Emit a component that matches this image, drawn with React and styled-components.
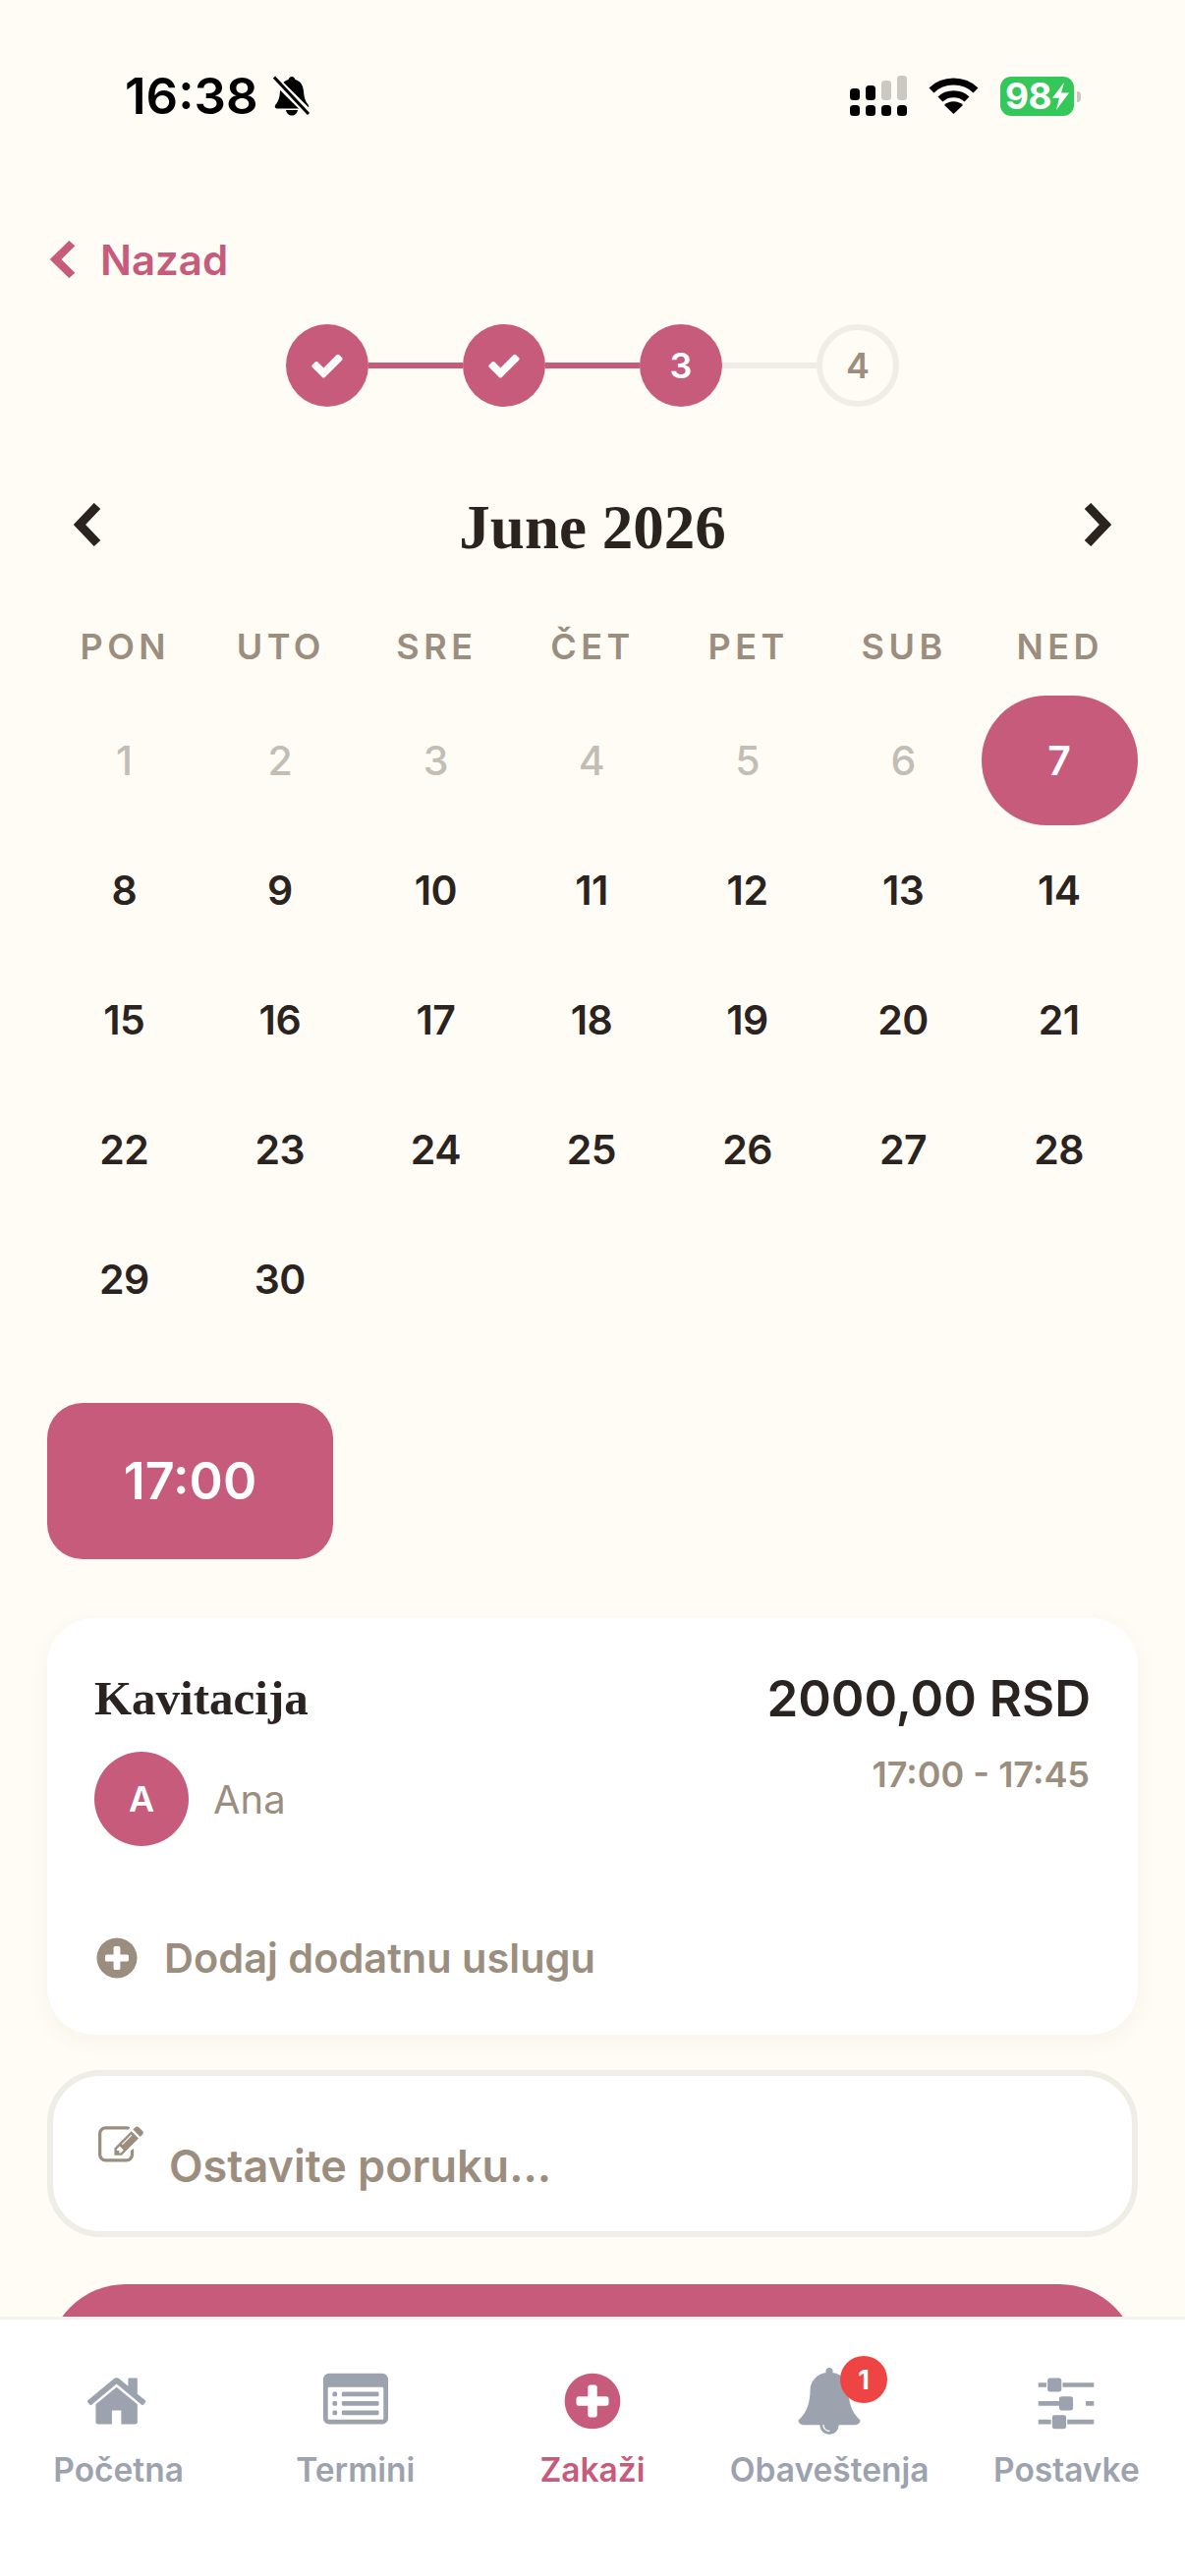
import styled, { createGlobalStyle } from "styled-components";

const PINK = "#c65b7c";
const INK = "#2a2320";
const MUTED = "#9c8e7e";
const LINE = "#f0ede6";
const GREY = "#9ca3af";

const GlobalStyle = createGlobalStyle`
  html, body { margin: 0; padding: 0; height: 2622px; overflow: hidden; background: #fffcf5; }
  body { font-family: Inter, "Noto Sans", sans-serif; color: ${INK}; }
  * { box-sizing: border-box; }
`;

const Page = styled.div`
  width: 1206px;
  height: 2622px;
  overflow: hidden;
  position: relative;
  background: #fffcf5;
`;

const StatusBar = styled.div`
  height: 41px;
  margin-top: 77px;
  padding: 0 113px 0 127px;
  display: flex;
  align-items: center;
  justify-content: space-between;
  color: #000;
`;

const StatusLeft = styled.div`
  display: flex;
  align-items: center;
  gap: 15px;
`;

const Clock = styled.span`
  font-size: 51px;
  font-weight: 600;
  line-height: 41px;
`;

const StatusRight = styled.div`
  display: flex;
  align-items: center;
  gap: 22px;
`;

const Battery = styled.div`
  width: 75px;
  height: 40px;
  border-radius: 11px;
  background: #34c759;
  color: #fff;
  display: flex;
  align-items: center;
  justify-content: center;
  gap: 1px;
  font-size: 37px;
  font-weight: 700;
  letter-spacing: -0.5px;
  position: relative;
  &::after {
    content: "";
    position: absolute;
    right: -7px;
    top: 15px;
    width: 4px;
    height: 11px;
    border-radius: 0 4px 4px 0;
    background: #c8c7c2;
  }
`;

const Back = styled.div`
  height: 42px;
  margin: 125px 0 0 51px;
  display: flex;
  align-items: center;
  gap: 24px;
  color: ${PINK};
  font-size: 42px;
  font-weight: 600;
`;

const Stepper = styled.div`
  margin-top: 45px;
  display: flex;
  justify-content: center;
  align-items: center;
`;

const StepDot = styled.div`
  width: 84px;
  height: 84px;
  border-radius: 50%;
  flex: none;
  display: flex;
  align-items: center;
  justify-content: center;
  font-size: 36px;
  font-weight: 600;
  background: ${(p) => (p.$on ? PINK : "transparent")};
  border: ${(p) => (p.$on ? "none" : `6px solid ${LINE}`)};
  color: ${(p) => (p.$on ? "#fff" : MUTED)};
`;

const StepLine = styled.div`
  width: 96px;
  height: 6px;
  background: ${(p) => (p.$on ? PINK : LINE)};
`;

const Calendar = styled.div`
  margin: 0 48px;
`;

const MonthRow = styled.div`
  height: 80px;
  margin-top: 80px;
  padding: 0 27px;
  display: flex;
  align-items: center;
  justify-content: space-between;
  color: ${INK};
`;

const MonthTitle = styled.h2`
  margin: 0;
  padding-top: 6px;
  font-family: "Liberation Serif", "DejaVu Serif", serif;
  font-size: 63px;
  font-weight: 700;
  line-height: 80px;
`;

const WeekRow = styled.div`
  display: grid;
  grid-template-columns: repeat(7, 1fr);
  margin-top: 59px;
  height: 50px;
  align-items: center;
`;

const WeekDay = styled.div`
  text-align: center;
  color: ${MUTED};
  font-size: 36px;
  font-weight: 600;
  letter-spacing: 4.5px;
`;

const DayGrid = styled.div`
  display: grid;
  grid-template-columns: repeat(7, 1fr);
  grid-auto-rows: 132px;
  margin-top: 25px;
`;

const Day = styled.div`
  display: flex;
  align-items: center;
  justify-content: center;
  padding-right: 2px;
  font-size: 41px;
  font-weight: ${(p) => (p.$past ? 500 : 600)};
  letter-spacing: -0.5px;
  border-radius: 66px;
  color: ${(p) => (p.$selected ? "#fff" : p.$past ? "#c2beb6" : INK)};
  background: ${(p) => (p.$selected ? PINK : "transparent")};
`;

const Slot = styled.div`
  width: 291px;
  height: 159px;
  margin: 60px 0 0 48px;
  border-radius: 36px;
  background: ${PINK};
  color: #fff;
  display: flex;
  align-items: center;
  justify-content: center;
  font-size: 52px;
  font-weight: 600;
`;

const Card = styled.div`
  margin: 60px 48px 0;
  height: 424px;
  padding: 52px 48px 0;
  background: #fff;
  border-radius: 48px;
  box-shadow: 0 6px 24px rgba(90, 70, 50, 0.05);
`;

const CardTop = styled.div`
  display: flex;
  justify-content: space-between;
  align-items: flex-start;
`;

const ServiceName = styled.div`
  font-family: "Liberation Serif", "DejaVu Serif", serif;
  font-size: 49px;
  font-weight: 700;
  line-height: 60px;
`;

const Staff = styled.div`
  margin-top: 24px;
  display: flex;
  align-items: center;
  gap: 25px;
  color: ${MUTED};
  font-size: 40px;
`;

const Avatar = styled.div`
  width: 96px;
  height: 96px;
  border-radius: 50%;
  background: ${PINK};
  color: #fff;
  display: flex;
  align-items: center;
  justify-content: center;
  font-size: 36px;
  font-weight: 600;
`;

const PriceBlock = styled.div`
  text-align: right;
`;

const Price = styled.div`
  font-size: 51px;
  font-weight: 600;
  line-height: 60px;
`;

const TimeRange = styled.div`
  margin-top: 25px;
  padding-right: 1px;
  color: ${MUTED};
  font-size: 36px;
  font-weight: 600;
  line-height: 44px;
`;

const AddRow = styled.div`
  margin-top: 87px;
  margin-left: -1px;
  display: flex;
  align-items: center;
  gap: 24px;
  color: ${MUTED};
  font-size: 41.5px;
  font-weight: 600;
`;

const MessageBox = styled.div`
  margin: 36px 48px 0;
  height: 170px;
  padding: 48px 46px;
  background: #fff;
  border: 6px solid ${LINE};
  border-radius: 54px;
  display: flex;
  align-items: flex-start;
  gap: 26px;
  color: ${MUTED};
  font-size: 45px;
  font-weight: 600;
`;

const MessageText = styled.span`
  margin-top: 16px;
  line-height: 56px;
`;

const Confirm = styled.div`
  margin: 48px 48px 0;
  height: 160px;
  border-radius: 80px;
  background: ${PINK};
`;

const TabBar = styled.nav`
  position: absolute;
  left: 0;
  right: 0;
  bottom: 0;
  height: 264px;
  background: #fff;
  border-top: 3px solid #f5f3ee;
  display: grid;
  grid-template-columns: repeat(5, 1fr);
  align-items: start;
`;

const Tab = styled.div`
  display: flex;
  flex-direction: column;
  align-items: center;
  color: ${(p) => (p.$active ? PINK : GREY)};
  font-size: 33.5px;
  font-weight: 600;
  white-space: nowrap;
`;

const TabIcon = styled.div`
  height: 72px;
  margin-top: 47px;
  margin-bottom: 14px;
  display: flex;
  align-items: center;
  justify-content: center;
  position: relative;
`;

const Badge = styled.span`
  position: absolute;
  left: 45px;
  top: -10px;
  width: 48px;
  height: 48px;
  border-radius: 50%;
  background: #ef4444;
  color: #fff;
  display: flex;
  align-items: center;
  justify-content: center;
  font-size: 27px;
  font-weight: 700;
`;

const Fa = ({ d, size, width }) => (
  <svg width={width || size} height={size} viewBox="0 0 1792 1792" fill="currentColor" preserveAspectRatio="xMidYMid meet">
    <path d={d} />
  </svg>
);

const ICONS = {
  home: "M1408 992v480q0 26-19 45t-45 19h-384v-384h-256v384h-384q-26 0-45-19t-19-45v-480q0-1 .5-3t.5-3l575-474 575 474q1 2 1 6zm223-69l-62 74q-8 9-21 11h-3q-13 0-21-7l-692-577-692 577q-12 8-24 7-13-2-21-11l-62-74q-8-10-7-23.5t11-21.5l719-599q32-26 76-26t76 26l244 204v-195q0-14 9-23t23-9h192q14 0 23 9t9 23v408l219 182q10 8 11 21.5t-7 23.5z",
  list: "M384 1184v64q0 13-9.5 22.5t-22.5 9.5h-64q-13 0-22.5-9.5t-9.5-22.5v-64q0-13 9.5-22.5t22.5-9.5h64q13 0 22.5 9.5t9.5 22.5zm0-256v64q0 13-9.5 22.5t-22.5 9.5h-64q-13 0-22.5-9.5t-9.5-22.5v-64q0-13 9.5-22.5t22.5-9.5h64q13 0 22.5 9.5t9.5 22.5zm0-256v64q0 13-9.5 22.5t-22.5 9.5h-64q-13 0-22.5-9.5t-9.5-22.5v-64q0-13 9.5-22.5t22.5-9.5h64q13 0 22.5 9.5t9.5 22.5zm1152 512v64q0 13-9.5 22.5t-22.5 9.5h-960q-13 0-22.5-9.5t-9.5-22.5v-64q0-13 9.5-22.5t22.5-9.5h960q13 0 22.5 9.5t9.5 22.5zm0-256v64q0 13-9.5 22.5t-22.5 9.5h-960q-13 0-22.5-9.5t-9.5-22.5v-64q0-13 9.5-22.5t22.5-9.5h960q13 0 22.5 9.5t9.5 22.5zm0-256v64q0 13-9.5 22.5t-22.5 9.5h-960q-13 0-22.5-9.5t-9.5-22.5v-64q0-13 9.5-22.5t22.5-9.5h960q13 0 22.5 9.5t9.5 22.5zm128 704v-832q0-13-9.5-22.5t-22.5-9.5h-1472q-13 0-22.5 9.5t-9.5 22.5v832q0 13 9.5 22.5t22.5 9.5h1472q13 0 22.5-9.5t9.5-22.5zm128-1088v1088q0 66-47 113t-113 47h-1472q-66 0-113-47t-47-113v-1088q0-66 47-113t113-47h1472q66 0 113 47t47 113z",
  plus: "M1344 960v-128q0-26-19-45t-45-19h-256v-256q0-26-19-45t-45-19h-128q-26 0-45 19t-19 45v256h-256q-26 0-45 19t-19 45v128q0 26 19 45t45 19h256v256q0 26 19 45t45 19h128q26 0 45-19t19-45v-256h256q26 0 45-19t19-45zm320-64q0 209-103 385.5t-279.5 279.5-385.5 103-385.5-103-279.5-279.5-103-385.5 103-385.5 279.5-279.5 385.5-103 385.5 103 279.5 279.5 103 385.5z",
  bell: "M912 1696q0-16-16-16-59 0-101.5-42.5t-42.5-101.5q0-16-16-16t-16 16q0 73 51.5 124.5t124.5 51.5q16 0 16-16zm816-288q0 52-38 90t-90 38h-448q0 106-75 181t-181 75-181-75-75-181h-448q-52 0-90-38t-38-90q50-42 91-88t85-119.5 74.5-158.5 50-206 19.5-260q0-152 117-282.5t307-158.5q-8-19-8-39 0-40 28-68t68-28 68 28 28 68q0 20-8 39 190 28 307 158.5t117 282.5q0 139 19.5 260t50 206 74.5 158.5 85 119.5 91 88z",
  sliders: "M480 1408v128h-352v-128h352zm352-128q26 0 45 19t19 45v256q0 26-19 45t-45 19h-256q-26 0-45-19t-19-45v-256q0-26 19-45t45-19h256zm160-384v128h-864v-128h864zm-640-512v128h-224v-128h224zm1312 1024v128h-736v-128h736zm-960-1152q26 0 45 19t19 45v256q0 26-19 45t-45 19h-256q-26 0-45-19t-19-45v-256q0-26 19-45t45-19h256zm320 512q26 0 45 19t19 45v256q0 26-19 45t-45 19h-256q-26 0-45-19t-19-45v-256q0-26 19-45t45-19h256zm640 128v128h-224v-128h224zm0-512v128h-864v-128h864z",
  check: "M1671 566q0 40-28 68l-724 724-136 136q-28 28-68 28t-68-28l-136-136-362-362q-28-28-28-68t28-68l136-136q28-28 68-28t68 28l294 295 656-657q28-28 68-28t68 28l136 136q28 28 28 68z",
  edit: "M888 1184l116-116-152-152-116 116v56h96v96h56zm440-720q-16-16-33 1l-350 350q-17 17-1 33t33-1l350-350q17-17 1-33zm80 594v190q0 119-84.5 203.5t-203.5 84.5h-832q-119 0-203.5-84.5t-84.5-203.5v-832q0-119 84.5-203.5t203.5-84.5h832q63 0 117 25 15 7 18 23 3 17-9 29l-49 49q-14 14-32 8-23-6-45-6h-832q-66 0-113 47t-47 113v832q0 66 47 113t113 47h832q66 0 113-47t47-113v-126q0-13 9-22l64-64q15-15 35-7t20 29zm-96-738l288 288-672 672h-288v-288zm444 132l-92 92-288-288 92-92q28-28 68-28t68 28l152 152q28 28 28 68t-28 68z",
};

const Chevron = ({ right, w = 29, h = 44 }) => (
  <svg width={w} height={h} viewBox="0 0 29 44" fill="none" stroke="currentColor" strokeWidth="9" preserveAspectRatio="none">
    <path d={right ? "M5 3 L23 22 L5 41" : "M24 3 L6 22 L24 41"} />
  </svg>
);

const MutedBell = () => (
  <svg width="38" height="41" viewBox="0 0 38 41">
    <path fill="#000" d="M19 1c-2 0-3 1.500-3.500 3C10 5.500 7.500 10 7 16c-.4 6-1.500 10-4.500 13.500-1.500 2-.5 4 2 4h29c2.500 0 3.500-2 2-4C32.500 26 31.500 22 31 16c-.5-6-3-10.500-8.500-12C22 2.500 21 1 19 1z" />
    <path fill="#000" d="M13 35h12c-.5 3.500-3 5.500-6 5.500s-5.500-2-6-5.500z" />
    <path stroke="#fffcf5" strokeWidth="8" d="M2 4 L36 38" />
    <path stroke="#000" strokeWidth="3" d="M1 1.500 L36 39" />
  </svg>
);

const Signal = () => (
  <svg width="58" height="41" viewBox="0 0 58 41">
    {[0, 16, 32, 48].map((x) => (
      <rect key={x} x={x} y="30" width="10" height="11" rx="3.500" fill="#000" />
    ))}
    <rect x="0" y="13" width="10" height="12" rx="3.500" fill="#000" />
    <rect x="16" y="10" width="10" height="15" rx="3.500" fill="#000" />
    <rect x="32" y="5" width="10" height="20" rx="3.500" fill="#c9c8c3" />
    <rect x="48" y="0" width="10" height="25" rx="3.500" fill="#c9c8c3" />
  </svg>
);

const Wifi = () => (
  <svg width="51" height="37" viewBox="0 0 51 37" fill="none" stroke="#000" strokeWidth="7">
    <path d="M3 13 C15 1 36 1 48 13" />
    <path d="M12 22 C19 15 32 15 39 22" />
    <path fill="#000" stroke="none" d="M25.500 37 L16 28 C21 23 30 23 35 28 Z" />
  </svg>
);

const Bolt = () => (
  <svg width="17" height="28" viewBox="0 0 17 32" fill="#fff" preserveAspectRatio="none">
    <path d="M12 0 L0 18 H7 L4 32 L17 12 H9 Z" />
  </svg>
);

const WEEK = ["PON", "UTO", "SRE", "ČET", "PET", "SUB", "NED"];
const DAYS = Array.from({ length: 30 }, (_, i) => i + 1);
const TABS = [
  { label: "Početna", icon: "home", size: 66 },
  { label: "Termini", icon: "list", size: 66 },
  { label: "Zakaži", icon: "plus", size: 66, active: true },
  { label: "Obaveštenja", icon: "bell", size: 68, badge: 1 },
  { label: "Postavke", icon: "sliders", size: 66 },
];

export default function App() {
  return (
    <Page>
      <GlobalStyle />
      <StatusBar>
        <StatusLeft>
          <Clock>16:38</Clock>
          <MutedBell />
        </StatusLeft>
        <StatusRight>
          <Signal />
          <Wifi />
          <Battery>
            98
            <Bolt />
          </Battery>
        </StatusRight>
      </StatusBar>

      <Back>
        <Chevron w={27} h={38} />
        Nazad
      </Back>

      <Stepper>
        <StepDot $on>
          <Fa d={ICONS.check} size={36} />
        </StepDot>
        <StepLine $on />
        <StepDot $on>
          <Fa d={ICONS.check} size={36} />
        </StepDot>
        <StepLine $on />
        <StepDot $on>3</StepDot>
        <StepLine />
        <StepDot>4</StepDot>
      </Stepper>

      <Calendar>
        <MonthRow>
          <Chevron />
          <MonthTitle>June 2026</MonthTitle>
          <Chevron right />
        </MonthRow>
        <WeekRow>
          {WEEK.map((d) => (
            <WeekDay key={d}>{d}</WeekDay>
          ))}
        </WeekRow>
        <DayGrid>
          {DAYS.map((d) => (
            <Day key={d} $past={d < 7} $selected={d === 7}>
              {d}
            </Day>
          ))}
        </DayGrid>
      </Calendar>

      <Slot>17:00</Slot>

      <Card>
        <CardTop>
          <div>
            <ServiceName>Kavitacija</ServiceName>
            <Staff>
              <Avatar>A</Avatar>
              Ana
            </Staff>
          </div>
          <PriceBlock>
            <Price>2000,00 RSD</Price>
            <TimeRange>17:00 - 17:45</TimeRange>
          </PriceBlock>
        </CardTop>
        <AddRow>
          <Fa d={ICONS.plus} size={54} width={48} />
          Dodaj dodatnu uslugu
        </AddRow>
      </Card>

      <MessageBox>
        <Fa d={ICONS.edit} size={46} />
        <MessageText>Ostavite poruku...</MessageText>
      </MessageBox>

      <Confirm />

      <TabBar>
        {TABS.map((t) => (
          <Tab key={t.label} $active={t.active}>
            <TabIcon>
              <Fa d={ICONS[t.icon]} size={t.size} />
              {t.badge && <Badge>{t.badge}</Badge>}
            </TabIcon>
            {t.label}
          </Tab>
        ))}
      </TabBar>
    </Page>
  );
}
